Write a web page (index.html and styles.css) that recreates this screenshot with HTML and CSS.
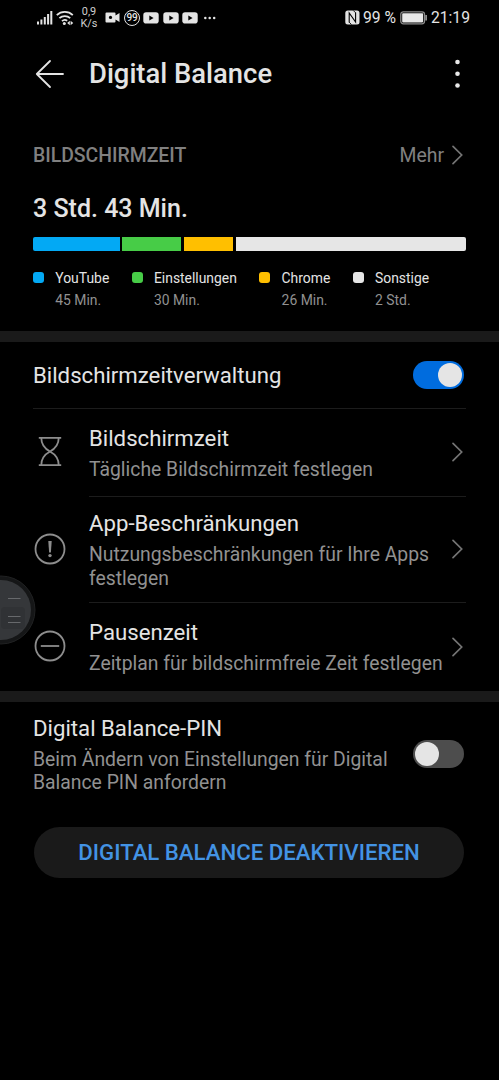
FILE: index.html
```
<!doctype html>
<html lang="de">
<head>
<meta charset="utf-8">
<meta name="viewport" content="width=device-width, initial-scale=1">
<title>Digital Balance</title>
<link rel="stylesheet" href="styles.css">
</head>

<body>
<div class="status">
	<svg class="signal" width="16" height="15" viewBox="0 0 16 15" fill="#e4e4e4">
		<rect x="0" y="11.5" width="2" height="3"/>
		<rect x="3.4" y="9.5" width="2" height="5"/>
		<rect x="6.8" y="7" width="2" height="7.5"/>
		<rect x="10.1" y="4" width="2" height="10.5"/>
		<rect x="13.3" y="1" width="2" height="13.5"/>
	</svg>
	<svg class="wifi" width="19" height="16" viewBox="0 0 19 16" fill="none" stroke="#e4e4e4" stroke-width="1.8">
		<path d="M.8 5.2a11.5 11.5 0 0 1 16 0M3.4 8.2a7.8 7.8 0 0 1 10.8 0M6 11.2a4 4 0 0 1 5.2-.4"/>
		<circle cx="8.3" cy="13.6" r="1.5" fill="#e4e4e4" stroke="none"/>
		<path d="M13.8 10.8v4.4l-2.6-2.2zM14.6 10.8v4.4l2.6-2.2z" fill="#e4e4e4" stroke="none"/>
	</svg>
	<div class="speed">0,9<br>K/s</div>
	<svg class="cam" width="15" height="11" viewBox="0 0 15 11">
		<path d="M1.5.5h8q1 0 1 1v2L14.5 1v9l-4-2.5v2q0 1-1 1h-8q-1 0-1-1v-8q0-1 1-1z" fill="#e4e4e4"/>
		<circle cx="5.5" cy="5.4" r="1.6" fill="#000"/>
	</svg>
	<div class="badge">99</div>
	<svg class="yt" width="16" height="12" viewBox="0 0 16 12"><rect x=".3" y=".3" width="15.4" height="11.2" rx="2.8" fill="#e4e4e4"/><path d="M6.3 3.5v5l4.3-2.5z" fill="#000"/></svg>
	<svg class="yt" width="16" height="12" viewBox="0 0 16 12"><rect x=".3" y=".3" width="15.4" height="11.2" rx="2.8" fill="#e4e4e4"/><path d="M6.3 3.5v5l4.3-2.5z" fill="#000"/></svg>
	<svg class="yt" width="16" height="12" viewBox="0 0 16 12"><rect x=".3" y=".3" width="15.4" height="11.2" rx="2.8" fill="#e4e4e4"/><path d="M6.3 3.5v5l4.3-2.5z" fill="#000"/></svg>
	<svg class="dots" width="14" height="4" viewBox="0 0 14 4" fill="#e4e4e4"><circle cx="2.3" cy="2" r="1.25"/><circle cx="6.7" cy="2" r="1.25"/><circle cx="11.2" cy="2" r="1.25"/></svg>
	<div class="right">
		<svg class="nfc" width="15" height="15" viewBox="0 0 15 15">
			<rect x=".3" y=".5" width="14.2" height="14" rx="2.5" fill="#e4e4e4"/>
			<path d="M4.2 12.500V3l6.400 9V2.500" fill="none" stroke="#000" stroke-width="1.100"/>
			<path d="M4.200 12.200l2.300 2.300M10.600 2.800L8.300.5" stroke="#000" stroke-width=".9"/>
		</svg>
		<span class="percent">99 %</span>
		<svg class="battery" width="28" height="14" viewBox="0 0 28 14">
			<rect x=".8" y=".8" width="23.7" height="12" rx="2.5" fill="none" stroke="#8b8b8b" stroke-width="1.3"/>
			<rect x="2.2" y="2.2" width="20.9" height="9.2" rx=".8" fill="#e8e8e8"/>
			<path d="M25.500 4h1.200v5.500h-1.200z" fill="#ccc"/>
		</svg>
		<span class="clock">21:19</span>
	</div>
</div>

<div class="header">
	<svg class="back" width="30" height="30" viewBox="0 0 30 30" fill="none" stroke="#e4e4e4" stroke-width="1.8" stroke-linecap="round" stroke-linejoin="round"><path d="M15 2L1.800 15 15 28M1.800 15H28"/></svg>
	<h1>Digital Balance</h1>
	<svg class="more" width="6" height="30" viewBox="0 0 6 30" fill="#e8e8e8"><circle cx="3.500" cy="3" r="2.300"/><circle cx="3.500" cy="14.800" r="2.300"/><circle cx="3.500" cy="26.500" r="2.300"/></svg>
</div>

<div class="usage">
	<div class="usage-head">
		<h2>BILDSCHIRMZEIT</h2>
		<a class="mehr">Mehr</a>
		<svg class="arrow" width="12" height="20" viewBox="0 0 12 20"><path d="M2 1.300l8.700 8.700L2 18.700"/></svg>
	</div>
	<div class="total">3 Std. 43 Min.</div>
	<div class="bar">
		<span class="blue"></span>
		<span class="green"></span>
		<span class="yellow"></span>
		<span class="white"></span>
	</div>
	<ul class="legend">
		<li><i class="blue"></i><div>YouTube<small>45 Min.</small></div></li>
		<li><i class="green"></i><div>Einstellungen<small>30 Min.</small></div></li>
		<li><i class="yellow"></i><div>Chrome<small>26 Min.</small></div></li>
		<li><i class="white"></i><div>Sonstige<small>2 Std.</small></div></li>
	</ul>
</div>

<div class="settings">
	<div class="row manage">
		<h3>Bildschirmzeitverwaltung</h3>
		<div class="switch on"></div>
	</div>
	<div class="row item">
		<svg class="icon" width="32" height="32" viewBox="0 0 32 32">
			<path d="M4.800 1.800h22.400M4.800 29.200h22.400M7.300 2c0 7 3.200 10.500 8.700 13.500C21.500 12.500 24.700 9 24.700 2M7.300 29c0-7 3.200-10.500 8.700-13.500 5.500 3 8.700 6.500 8.700 13.500"/>
		</svg>
		<div class="text line">
			<h3>Bildschirmzeit</h3>
			<p>Tägliche Bildschirmzeit festlegen</p>
			<svg class="arrow" width="12" height="20" viewBox="0 0 12 20"><path d="M2 1.300l8.700 8.700L2 18.700"/></svg>
		</div>
	</div>
	<div class="row item tall">
		<svg class="icon" width="32" height="32" viewBox="0 0 32 32">
			<circle cx="16" cy="16" r="14.500"/>
			<path d="M14.300 8h3.400l-.8 11.500h-1.800z" class="fill"/>
			<circle cx="16" cy="22.600" r="1.700" class="fill"/>
		</svg>
		<div class="text line">
			<h3>App-Beschränkungen</h3>
			<p>Nutzungsbeschränkungen für Ihre Apps<br>festlegen</p>
			<svg class="arrow" width="12" height="20" viewBox="0 0 12 20"><path d="M2 1.300l8.700 8.700L2 18.700"/></svg>
		</div>
	</div>
	<div class="row item">
		<svg class="icon" width="32" height="32" viewBox="0 0 32 32">
			<circle cx="16" cy="16" r="14.500"/>
			<path d="M6.800 16h18.400"/>
		</svg>
		<div class="text">
			<h3>Pausenzeit</h3>
			<p>Zeitplan für bildschirmfreie Zeit festlegen</p>
			<svg class="arrow" width="12" height="20" viewBox="0 0 12 20"><path d="M2 1.300l8.700 8.700L2 18.700"/></svg>
		</div>
	</div>
</div>

<div class="row pin">
	<div>
		<h3>Digital Balance-PIN</h3>
		<p>Beim Ändern von Einstellungen für Digital<br>Balance PIN anfordern</p>
	</div>
	<div class="switch"></div>
</div>
<button class="off">DIGITAL BALANCE DEAKTIVIEREN</button>

<!-- floating dock button -->
<div class="float">
	<svg width="36" height="70" viewBox="0 0 36 70">
		<circle cx="1" cy="35" r="34" fill="#151617" stroke="#202122"/>
		<circle cx="1" cy="35" r="30" fill="#35373a"/>
		<rect x="1" y="32" width="24" height="22" rx="4" fill="#303235"/>
		<path d="M8 23.500h12.500M8 41.500h12.500M8 47.500h12.500" stroke="#67696c" stroke-width="1.200"/>
	</svg>
</div>
</body>
</html>
```
FILE: styles.css
```
*{margin:0; padding:0; box-sizing:border-box; list-style:none;}
body{width:499px; height:1080px; background:#000; color:#e4e4e4; font-family:Roboto,"Noto Sans",sans-serif; position:relative; overflow:hidden;}
svg{display:block; flex:none;}
h1,h2,h3{font-weight:400;}

.status{height:35px; padding:0 29px 0 37px; display:flex; align-items:center; font-size:15.7px;}
.wifi{margin-left:3px;}
.speed{width:22px; margin-left:3px; text-align:center; font-size:10.9px; line-height:12px; color:#d0d0d0;}
.cam{margin-left:5px;}
.badge{width:16px; height:16px; margin:0 3px 0 4px; border:1.5px solid #e4e4e4; border-radius:50%; font-size:10px; letter-spacing:-.3px; line-height:14px; text-align:center; font-weight:500;}
.yt{margin-right:3.5px;}
.dots{margin-left:1px;}
.right{margin-left:auto; display:flex; align-items:center;}
.percent{margin-left:3px;}
.battery{margin:0 3px 0 4px;}

.header{height:77px; padding:0 39px 0 35px; display:flex; align-items:center;}
.header h1{margin-left:24px; flex:1; font-size:27.4px; font-weight:500; line-height:36px;}

.usage{height:219px; padding:0 33px;}
.usage-head{height:86px; display:flex; align-items:center; color:#808080;}
.usage-head h2{flex:1; font-size:19.4px; font-weight:500;}
.mehr{font-size:19.4px; margin-right:7px;}
.usage-head .arrow{margin-right:3px;}
.arrow path{fill:none; stroke:#747474; stroke-width:1.7; stroke-linecap:round;}
.total{height:39px; line-height:22px; font-size:25px; font-weight:500;}
.bar{display:flex; gap:2.5px; height:14px; border-radius:2px; overflow:hidden;}
.bar .blue{width:86.7px;}
.bar .green{width:59px;}
.bar .yellow{width:49.5px;}
.bar .white{flex:1;}
.blue{background:#03a9f4;}
.green{background:#47cc47;}
.yellow{background:#ffbf00;}
.white{background:#e6e6e6;}
.legend{display:flex; gap:22.4px; margin-top:18px; font-size:13.9px; line-height:18px;}
.legend li{display:flex;}
.legend i{width:11px; height:11px; border-radius:3px; margin:3px 11.3px 0 0;}
.legend small{display:block; margin-top:4px; font-size:13.9px; line-height:18px; color:#919191;}

.settings{border:solid #1a1a1a; border-width:11px 0;}
.row{display:flex; align-items:center;}
.row h3{font-size:22.2px; line-height:28px;}
.row p{font-size:19.35px; line-height:24px; color:#919191;}
.manage{height:67px; margin:0 33px; border-bottom:1px solid #1c1c1c; justify-content:space-between;}
.switch{width:51px; height:28px; margin-right:2px; padding:2px; border-radius:14px; background:#4d4d4d; flex:none;}
.switch:after{content:""; display:block; width:24px; height:24px; border-radius:50%; background:#e5e5e5;}
.switch.on{background:#006cde;}
.switch.on:after{margin-left:22.5px;}
.item{height:88px; padding:0 33px 0 34px;}
.item.tall{height:106px;}
.icon{fill:none; stroke:#8d8d8d; stroke-width:1.8; margin-top:-2px;}
.icon .fill{fill:#8d8d8d; stroke:none;}
.text{position:relative; flex:1; height:100%; margin-left:23px; padding-top:15px; white-space:nowrap;}
.text p{margin-top:6px;}
.tall .text{padding-top:12px;}
.line{border-bottom:1px solid #1c1c1c;}
.text .arrow{position:absolute; right:3px; top:50%; margin-top:-10.5px;}
.pin{height:103px; padding:0 33px; justify-content:space-between; white-space:nowrap;}
.pin p{margin-top:6px; line-height:23px;}
.off{display:block; width:430px; height:51px; margin:22px 0 0 34px; border:0; border-radius:26px; background:#1a1a1a; color:#4393e4; font:500 22.2px/51px Roboto,sans-serif;}

.float{position:absolute; left:0; top:575px;}
```
